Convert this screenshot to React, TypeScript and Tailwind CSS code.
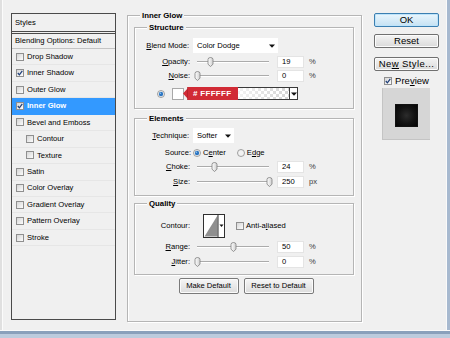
import React from 'react';

type StyleItem = { name: string; checked?: boolean; active?: boolean; indent?: boolean };

const styleItems: StyleItem[] = [
  { name: 'Drop Shadow' },
  { name: 'Inner Shadow', checked: true },
  { name: 'Outer Glow' },
  { name: 'Inner Glow', checked: true, active: true },
  { name: 'Bevel and Emboss' },
  { name: 'Contour', indent: true },
  { name: 'Texture', indent: true },
  { name: 'Satin' },
  { name: 'Color Overlay' },
  { name: 'Gradient Overlay' },
  { name: 'Pattern Overlay' },
  { name: 'Stroke' },
];

const Check = ({ checked = false }: { checked?: boolean }) => (
  <span className="flex h-[8px] w-[8px] shrink-0 items-center justify-center border border-[#8f8f8f] bg-gradient-to-br from-[#d6d6d6] to-[#fcfcfc]">
    {checked && (
      <svg width="6" height="6" viewBox="0 0 6 6">
        <path d="M0.8 3 L2.4 4.8 L5.3 0.8" fill="none" stroke="#1d3d78" strokeWidth="1.2" />
      </svg>
    )}
  </span>
);

const Radio = ({ on = false }: { on?: boolean }) => (
  <svg width="8" height="8" viewBox="0 0 8 8" className="shrink-0">
    <circle cx="4" cy="4" r="3.5" fill="#f2f2f2" stroke="#8a8a8a" strokeWidth="0.8" />
    {on && <circle cx="4" cy="4" r="2.2" fill="#2d76c2" />}
    {on && <circle cx="3.4" cy="3.3" r="0.8" fill="#8ec3f0" />}
  </svg>
);

const Arrow = () => (
  <svg width="6" height="4" viewBox="0 0 6 4">
    <path d="M0 0.5h6L3 3.8z" fill="#111" />
  </svg>
);

const Thumb = () => (
  <svg width="7" height="10" viewBox="0 0 7 10">
    <defs>
      <linearGradient id="thumbFill" x1="0" x2="1">
        <stop offset="0" stopColor="#ffffff" />
        <stop offset="1" stopColor="#cfcfcf" />
      </linearGradient>
    </defs>
    <path d="M1 2.5Q1 0.5 3.5 0.5Q6 0.5 6 2.5V7.2L3.5 9.5L1 7.2Z" fill="url(#thumbFill)" stroke="#7f7f7f" strokeWidth="0.8" />
  </svg>
);

const Slider = ({ pct }: { pct: number }) => (
  <div className="relative ml-[7px] h-[12px] w-[72px] shrink-0">
    <div className="absolute left-0 right-0 top-[5px] h-[2px] border-b border-t border-b-white border-t-[#ababab]" />
    <div className="absolute top-[1px]" style={{ left: `${pct * 72 - 3.5}px` }}>
      <Thumb />
    </div>
  </div>
);

const U = ({ children }: { children: React.ReactNode }) => (
  <span className="underline decoration-[0.8px] underline-offset-[1px]">{children}</span>
);

const SliderRow = ({
  label,
  value,
  pct,
  unit,
  className = '',
}: {
  label: React.ReactNode;
  value: string;
  pct: number;
  unit: string;
  className?: string;
}) => (
  <div className={`flex h-[12px] items-center ${className}`}>
    <span className="w-[55px] shrink-0 text-right">{label}</span>
    <Slider pct={pct} />
    <div className="ml-[8px] flex h-[12px] w-[27px] items-center border border-[#e4e4e4] bg-white pl-[4px]">{value}</div>
    <span className="ml-[5px] text-[#3a3a3a]">{unit}</span>
  </div>
);

const GroupBox = ({
  title,
  className = '',
  children,
}: {
  title: string;
  className?: string;
  children?: React.ReactNode;
}) => (
  <div className={`relative border border-[#b5b5b5] shadow-[inset_1px_1px_0_#fff,1px_1px_0_#fff] ${className}`}>
    <span className="absolute left-[12px] top-[-6px] bg-[#f0f0f0] px-[2px] text-[7.8px] font-bold leading-[11px]">{title}</span>
    {children}
  </div>
);

const SmallButton = ({ children, className = '' }: { children: React.ReactNode; className?: string }) => (
  <div
    className={`flex h-[16px] items-center justify-center rounded-[2px] border border-[#7a7a7a] bg-gradient-to-b from-[#f6f6f6] to-[#dcdcdc] shadow-[inset_0_0_0_1px_#fbfbfb] ${className}`}
  >
    {children}
  </div>
);

const LeftPanel = () => (
  <div className="mt-[13px] flex h-[307px] w-[105px] shrink-0 flex-col border border-[#4a4a4a]">
    <div className="flex h-[18px] items-center border-b border-[#4a4a4a] pl-[3px]">Styles</div>
    <div className="mt-[1px] flex h-[16px] items-center border-b border-t border-b-[#c4c4c4] border-t-[#4a4a4a] pl-[3px]">
      Blending Options: Default
    </div>
    {styleItems.map((s) => (
      <div
        key={s.name}
        className={`flex h-[16.45px] items-center gap-[3px] border-b ${
          s.active ? 'border-[#3399ff] bg-[#3399ff] font-bold text-white' : 'border-[#e6e6e6]'
        } ${s.indent ? 'pl-[14px]' : 'pl-[4px]'}`}
      >
        <Check checked={s.checked} />
        <span>{s.name}</span>
      </div>
    ))}
  </div>
);

const ColorRow = () => (
  <div className="mt-[5px] flex h-[13px] items-center">
    <span className="ml-[22px]">
      <Radio on />
    </span>
    <span className="ml-[7px] h-[12px] w-[12px] border border-[#a8a8a8] bg-white" />
    <div className="relative ml-[4px] flex h-[13px] w-[110px] border border-[#3a3a3a]">
      <div className="flex-1 bg-[linear-gradient(to_right,#fff_30%,rgba(255,255,255,0)),repeating-conic-gradient(#d4d4d4_0_25%,#fff_0_50%)] bg-[length:100%_100%,6px_6px]" />
      <div className="flex w-[8px] items-center justify-center border-l border-[#3a3a3a] bg-white">
        <Arrow />
      </div>
      <div className="absolute left-[-6px] top-[-1px] flex h-[13px] w-[55px] items-center">
        <svg width="55" height="13" viewBox="0 0 55 13" className="absolute left-0 top-0">
          <path d="M0 6.5L4.5 1.5V0H55V13H4.5V11.5Z" fill="#d12b35" />
          <path d="M4.5 0V13" stroke="#a81d27" strokeWidth="0.6" />
        </svg>
        <span className="relative ml-[10px] text-[8px] font-bold tracking-[0.3px] text-white"># FFFFFF</span>
      </div>
    </div>
  </div>
);

const InnerGlow = () => (
  <GroupBox title="Inner Glow" className="ml-[11px] mt-[15px] flex h-[307px] w-[235px] shrink-0 flex-col">
    <GroupBox title="Structure" className="ml-[6px] mt-[11px] flex h-[82px] w-[220px] flex-col">
      <div className="mt-[10px] flex h-[15px] items-center">
        <span className="w-[54px] text-right">
          <U>B</U>lend Mode:
        </span>
        <div className="ml-[4px] flex h-[15px] w-[85px] items-center justify-between bg-white pl-[4px] pr-[3px]">
          <span>Color Dodge</span>
          <Arrow />
        </div>
      </div>
      <SliderRow className="mt-[3px]" label={<><U>O</U>pacity:</>} value="19" pct={0.19} unit="%" />
      <SliderRow className="mt-[2px]" label={<><U>N</U>oise:</>} value="0" pct={0} unit="%" />
      <ColorRow />
    </GroupBox>

    <GroupBox title="Elements" className="ml-[6px] mt-[9px] flex h-[78px] w-[220px] flex-col">
      <div className="mt-[9px] flex h-[15px] items-center">
        <span className="w-[54px] text-right">
          <U>T</U>echnique:
        </span>
        <div className="ml-[4px] flex h-[15px] w-[41px] items-center justify-between bg-white pl-[4px] pr-[3px]">
          <span>Softer</span>
          <Arrow />
        </div>
      </div>
      <div className="mt-[4px] flex h-[11px] items-center">
        <span className="w-[56px] text-right">Source:</span>
        <span className="ml-[2px]">
          <Radio on />
        </span>
        <span className="ml-[2px]">
          C<U>e</U>nter
        </span>
        <span className="ml-[11px]">
          <Radio />
        </span>
        <span className="ml-[2px]">
          E<U>d</U>ge
        </span>
      </div>
      <SliderRow className="mt-[3px]" label={<><U>C</U>hoke:</>} value="24" pct={0.24} unit="%" />
      <SliderRow className="mt-[3px]" label={<><U>S</U>ize:</>} value="250" pct={1} unit="px" />
    </GroupBox>

    <GroupBox title="Quality" className="ml-[6px] mt-[7px] flex h-[72px] w-[220px] flex-col">
      <div className="mt-[10px] flex h-[24px] items-center">
        <span className="w-[55px] text-right">Contour:</span>
        <svg width="22" height="24" viewBox="0 0 22 24" className="ml-[13px]">
          <rect x="0.5" y="0.5" width="21" height="23" fill="#fff" stroke="#2f2f2f" />
          <path d="M1.5 22.5L14.5 1.5V22.5Z" fill="#8f8f8f" />
          <path d="M15 0.5V23.5" stroke="#2f2f2f" />
          <path d="M16.5 10.5h4l-2 2.5z" fill="#111" />
        </svg>
        <span className="ml-[11px]">
          <Check />
        </span>
        <span className="ml-[2px]">
          Anti-a<U>l</U>iased
        </span>
      </div>
      <SliderRow className="mt-[3px]" label={<><U>R</U>ange:</>} value="50" pct={0.5} unit="%" />
      <SliderRow className="mt-[3px]" label={<><U>J</U>itter:</>} value="0" pct={0} unit="%" />
    </GroupBox>

    <div className="mt-[3px] flex justify-center gap-[5px] pl-[3px]">
      <SmallButton className="w-[60px]">Make Default</SmallButton>
      <SmallButton className="w-[70px]">Reset to Default</SmallButton>
    </div>
  </GroupBox>
);

const DialogButton = ({ children, primary = false, className = '' }: { children: React.ReactNode; primary?: boolean; className?: string }) => (
  <div
    className={`flex h-[14px] w-[65px] items-center justify-center rounded-[2px] border bg-gradient-to-b text-[9.5px] ${
      primary
        ? 'border-[#3c7fb1] from-[#eaf6fd] to-[#c6e2f3] shadow-[inset_0_0_0_1px_#bfe4fa]'
        : 'border-[#707070] from-[#f4f4f4] to-[#dadada] shadow-[inset_0_0_0_1px_#fcfcfc]'
    } ${className}`}
  >
    {children}
  </div>
);

const RightColumn = () => (
  <div className="ml-[12px] mt-[13px] flex w-[65px] shrink-0 flex-col">
    <DialogButton primary>OK</DialogButton>
    <DialogButton className="mt-[7px]">Reset</DialogButton>
    <DialogButton className="mt-[9px]">
      <span className="tracking-[0.4px]">
        Ne<U>w</U> Style...
      </span>
    </DialogButton>
    <div className="mt-[6px] flex h-[8px] items-center justify-center gap-[3px] text-[9.5px]">
      <Check checked />
      <span>
        Pre<U>v</U>iew
      </span>
    </div>
    <div className="ml-[8px] mt-[3px] flex h-[52px] w-[48px] items-center justify-center border-b border-l border-[#c4c4c4] bg-[#d6d6d6] pt-[3px]">
      <div className="h-[23px] w-[23px] border border-[#111] bg-[radial-gradient(circle,#2c2c2c_0%,#121212_55%,#050505_100%)]" />
    </div>
  </div>
);

export default function App() {
  return (
    <div className="flex h-[338px] w-[450px] flex-col overflow-hidden bg-[#f0f0f0] font-['Liberation_Sans',Arial,sans-serif] text-[7.6px] leading-none text-black">
      <div className="flex h-[330px]">
        <div className="flex flex-1 items-start pl-[11px] shadow-[inset_2px_0_0_#e0e0e0,inset_3px_0_0_#fbfbfb]">
          <LeftPanel />
          <InnerGlow />
          <RightColumn />
        </div>
        <div className="w-[4px] border-l border-[#fafafa] bg-[#a7b9cf]" />
      </div>
      <div className="h-[8px] border-t border-[#fafafa] bg-[linear-gradient(#8aa0bb_0,#8aa0bb_3px,#bccbdd_3px)]" />
    </div>
  );
}
